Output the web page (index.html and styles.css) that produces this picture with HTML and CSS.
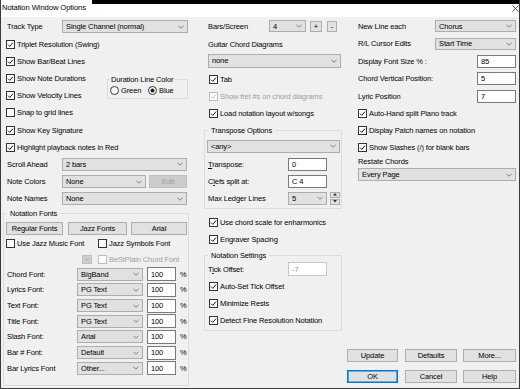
FILE: index.html
```html
<!DOCTYPE html>
<html><head><meta charset="utf-8"><title>Notation Window Options</title><link rel="stylesheet" href="styles.css"></head>
<body>
<div class="win">
  <div class="titlebar">
    <span class="title">Notation Window Options</span>
    <span class="tb-fill"><svg class="close" viewBox="0 0 8 8"><path d="M0.5 0.5L7.5 7.5M7.5 0.5L0.5 7.5"/></svg></span>
  </div>
  <div class="content">
    <!-- LEFT COLUMN -->
    <div class="col left">
      <div class="row lrow"><span class="lbl w55">Track Type</span><div class="combo w126"><span>Single Channel (normal)</span><svg class="chev" viewBox="0 0 7 4"><path d="M.5 .5 3.5 3.5 6.5 .5"/></svg></div></div>
      <div class="row cbrow"><i class="cb"><svg viewBox="0 0 7 7"><path d="M1 3.6 2.8 5.4 6 1.6"/></svg></i>Triplet Resolution (Swing)</div>
      <div class="row cbrow"><i class="cb"><svg viewBox="0 0 7 7"><path d="M1 3.6 2.8 5.4 6 1.6"/></svg></i>Show Bar/Beat Lines</div>
      <div class="durwrap">
        <div class="durchecks">
          <div class="row cbrow"><i class="cb"><svg viewBox="0 0 7 7"><path d="M1 3.6 2.8 5.4 6 1.6"/></svg></i>Show Note Durations</div>
          <div class="row cbrow"><i class="cb"><svg viewBox="0 0 7 7"><path d="M1 3.6 2.8 5.4 6 1.6"/></svg></i>Show Velocity Lines</div>
        </div>
        <fieldset class="dur">
          <legend>Duration Line Color</legend>
          <div class="radios">
            <span class="ritem"><i class="rb"><svg viewBox="0 0 9 9"><circle cx="4.5" cy="4.5" r="4" class="ring"/></svg></i>Green</span>
            <span class="ritem"><i class="rb"><svg viewBox="0 0 9 9"><circle cx="4.5" cy="4.5" r="4" class="ring"/><circle cx="4.5" cy="4.5" r="2" class="dot"/></svg></i>Blue</span>
          </div>
        </fieldset>
      </div>
      <div class="row cbrow"><i class="cb"></i>Snap to grid lines</div>
      <div class="row cbrow"><i class="cb"><svg viewBox="0 0 7 7"><path d="M1 3.6 2.8 5.4 6 1.6"/></svg></i>Show Key Signature</div>
      <div class="row cbrow"><i class="cb"><svg viewBox="0 0 7 7"><path d="M1 3.6 2.8 5.4 6 1.6"/></svg></i>Highlight playback notes in Red</div>
      <div class="row lrow"><span class="lbl w55">Scroll Ahead</span><div class="combo w125"><span>2 bars</span><svg class="chev" viewBox="0 0 7 4"><path d="M.5 .5 3.5 3.5 6.5 .5"/></svg></div></div>
      <div class="row lrow"><span class="lbl w55">Note Colors</span><div class="combo w84"><span>None</span><svg class="chev" viewBox="0 0 7 4"><path d="M.5 .5 3.5 3.5 6.5 .5"/></svg></div><div class="btn dbtn w38 ml3">Edit</div></div>
      <div class="row lrow"><span class="lbl w55">Note Names</span><div class="combo w125"><span>None</span><svg class="chev" viewBox="0 0 7 4"><path d="M.5 .5 3.5 3.5 6.5 .5"/></svg></div></div>

      <fieldset class="fonts">
        <legend>Notation Fonts</legend>
        <div class="btnline">
          <div class="btn w57">Regular Fonts</div>
          <div class="btn w59 ml5">Jazz Fonts</div>
          <div class="btn w56 ml4">Arial</div>
        </div>
        <div class="frow h17">
          <span class="citem w92"><i class="cb"></i>Use Jazz Music Font</span>
          <span class="citem"><i class="cb"></i>Jazz Symbols Font</span>
        </div>
        <div class="frow h14">
          <div class="btn dbtn plus">+</div>
          <span class="citem dis-text"><i class="cb dis"></i>BeStPlain Chord Font</span>
        </div>
        <div class="frow fontrow"><span class="flbl">Chord Font:</span><div class="combo w66"><span>BigBand</span><svg class="chev" viewBox="0 0 7 4"><path d="M.5 .5 3.5 3.5 6.5 .5"/></svg></div><div class="inp w29 ml4 h14">100</div><span class="pct">%</span></div>
        <div class="frow fontrow"><span class="flbl">Lyrics Font:</span><div class="combo w66"><span>PG Text</span><svg class="chev" viewBox="0 0 7 4"><path d="M.5 .5 3.5 3.5 6.5 .5"/></svg></div><div class="inp w29 ml4 h14">100</div><span class="pct">%</span></div>
        <div class="frow fontrow"><span class="flbl">Text Font:</span><div class="combo w66"><span>PG Text</span><svg class="chev" viewBox="0 0 7 4"><path d="M.5 .5 3.5 3.5 6.5 .5"/></svg></div><div class="inp w29 ml4 h14">100</div><span class="pct">%</span></div>
        <div class="frow fontrow"><span class="flbl">Title Font:</span><div class="combo w66"><span>PG Text</span><svg class="chev" viewBox="0 0 7 4"><path d="M.5 .5 3.5 3.5 6.5 .5"/></svg></div><div class="inp w29 ml4 h14">100</div><span class="pct">%</span></div>
        <div class="frow fontrow"><span class="flbl">Slash Font:</span><div class="combo w66"><span>Arial</span><svg class="chev" viewBox="0 0 7 4"><path d="M.5 .5 3.5 3.5 6.5 .5"/></svg></div><div class="inp w29 ml4 h14">100</div><span class="pct">%</span></div>
        <div class="frow fontrow"><span class="flbl">Bar # Font:</span><div class="combo w66"><span>Default</span><svg class="chev" viewBox="0 0 7 4"><path d="M.5 .5 3.5 3.5 6.5 .5"/></svg></div><div class="inp w29 ml4 h14">100</div><span class="pct">%</span></div>
        <div class="frow fontrow"><span class="flbl">Bar Lyrics Font</span><div class="combo w66"><span>Other...</span><svg class="chev" viewBox="0 0 7 4"><path d="M.5 .5 3.5 3.5 6.5 .5"/></svg></div><div class="inp w29 ml4 h14">100</div><span class="pct">%</span></div>
      </fieldset>
    </div>

    <!-- MIDDLE COLUMN -->
    <div class="col mid">
      <div class="row mrow h18"><span class="lbl w61">Bars/Screen</span><div class="combo w37 h12"><span>4</span><svg class="chev" viewBox="0 0 7 4"><path d="M.5 .5 3.5 3.5 6.5 .5"/></svg></div><div class="btn sbtn w12 ml4">+</div><div class="btn sbtn w10 ml5">-</div></div>
      <div class="row mrow h18"><span class="lbl">Guitar Chord Diagrams</span></div>
      <div class="row mrow h15"><div class="combo w133 h14"><span>none</span><svg class="chev" viewBox="0 0 7 4"><path d="M.5 .5 3.5 3.5 6.5 .5"/></svg></div></div>
      <div class="row mcb tabrow"><i class="cb"><svg viewBox="0 0 7 7"><path d="M1 3.6 2.8 5.4 6 1.6"/></svg></i>Tab</div>
      <div class="row mcb h17h dis-text"><i class="cb dis"><svg viewBox="0 0 7 7"><path d="M1 3.6 2.8 5.4 6 1.6"/></svg></i>Show fret #s on chord diagrams</div>
      <div class="row mcb"><i class="cb"><svg viewBox="0 0 7 7"><path d="M1 3.6 2.8 5.4 6 1.6"/></svg></i>Load notation layout w/songs</div>

      <fieldset class="trans">
        <legend>Transpose Options</legend>
        <div class="combo w133 any"><span>&lt;any&gt;</span><svg class="chev" viewBox="0 0 7 4"><path d="M.5 .5 3.5 3.5 6.5 .5"/></svg></div>
        <div class="row grow mt3"><span class="glbl"><u>T</u>ranspose:</span><div class="inp w39">0</div></div>
        <div class="row grow"><span class="glbl">C<u>l</u>efs split at:</span><div class="inp w39">C 4</div></div>
        <div class="row grow"><span class="glbl">Max Ledger Lines</span><div class="combo w39"><span>5</span><svg class="chev" viewBox="0 0 7 4"><path d="M.5 .5 3.5 3.5 6.5 .5"/></svg></div>
          <div class="spin"><span class="sp"><svg viewBox="0 0 5 3"><path d="M0 3 2.5 0 5 3z"/></svg></span><span class="sp"><svg viewBox="0 0 5 3"><path d="M0 0 2.5 3 5 0z"/></svg></span></div>
        </div>
      </fieldset>

      <div class="row mcb mt5"><i class="cb"><svg viewBox="0 0 7 7"><path d="M1 3.6 2.8 5.4 6 1.6"/></svg></i>Use chord scale for enharmonics</div>
      <div class="row mcb"><i class="cb"><svg viewBox="0 0 7 7"><path d="M1 3.6 2.8 5.4 6 1.6"/></svg></i>Engraver Spacing</div>

      <fieldset class="nset">
        <legend>Notation Settings</legend>
        <div class="row grow"><span class="glbl">T<u>i</u>ck Offset:</span><div class="inp w39 h14 dinp">-7</div></div>
        <div class="row gcb"><i class="cb"><svg viewBox="0 0 7 7"><path d="M1 3.6 2.8 5.4 6 1.6"/></svg></i>Auto-Set Tick Offset</div>
        <div class="row gcb"><i class="cb"><svg viewBox="0 0 7 7"><path d="M1 3.6 2.8 5.4 6 1.6"/></svg></i>Minimize Rests</div>
        <div class="row gcb"><i class="cb"><svg viewBox="0 0 7 7"><path d="M1 3.6 2.8 5.4 6 1.6"/></svg></i>Detect Fine Resolution Notation</div>
      </fieldset>
    </div>

    <!-- RIGHT COLUMN -->
    <div class="col right">
      <div class="row rrow h18"><span class="lbl w77">New Line each</span><div class="combo w81 h12"><span>Chorus</span><svg class="chev" viewBox="0 0 7 4"><path d="M.5 .5 3.5 3.5 6.5 .5"/></svg></div></div>
      <div class="row rrow h17h"><span class="lbl w77">R/L Cursor Edits</span><div class="combo w81 h12"><span>Start Time</span><svg class="chev" viewBox="0 0 7 4"><path d="M.5 .5 3.5 3.5 6.5 .5"/></svg></div></div>
      <div class="row rrow h17h"><span class="lbl w119">Display Font Size % :</span><div class="inp w39 h12">85</div></div>
      <div class="row rrow h17h"><span class="lbl w119">Chord Vertical Position:</span><div class="inp w39 h12">5</div></div>
      <div class="row rrow h17h"><span class="lbl w119">Lyric Position</span><div class="inp w39 h12">7</div></div>
      <div class="row rrow"><i class="cb"><svg viewBox="0 0 7 7"><path d="M1 3.6 2.8 5.4 6 1.6"/></svg></i>Auto-Hand split Piano track</div>
      <div class="row rrow"><i class="cb"><svg viewBox="0 0 7 7"><path d="M1 3.6 2.8 5.4 6 1.6"/></svg></i>Display Patch names on notation</div>
      <div class="row rrow"><i class="cb"><svg viewBox="0 0 7 7"><path d="M1 3.6 2.8 5.4 6 1.6"/></svg></i>Show Slashes (/) for blank bars</div>
      <div class="row rrow h10">Restate Chords</div>
      <div class="combo w158 every"><span>Every Page</span><svg class="chev" viewBox="0 0 7 4"><path d="M.5 .5 3.5 3.5 6.5 .5"/></svg></div>
      <div class="btnrow bottom1">
        <div class="btn w51">Update</div>
        <div class="btn w52 ml7">Defaults</div>
        <div class="btn w53 ml6">More...</div>
      </div>
      <div class="btnrow bottom2">
        <div class="btn w51 okbtn">OK</div>
        <div class="btn w52 ml7">Cancel</div>
        <div class="btn w53 ml6">Help</div>
      </div>
    </div>
  </div>
</div>
</body></html>
```
FILE: styles.css
```css
*{box-sizing:border-box}
html,body{margin:0;padding:0}
body{width:520px;height:389px;overflow:hidden;font-family:"Liberation Sans",Arial,sans-serif;font-size:7.5px;letter-spacing:-0.12px;color:#000;background:#f0f0f0}
.win{width:520px;height:389px;display:flex;flex-direction:column;border:1px solid #3a3a3a;border-top:0;background:#f0f0f0}
.titlebar{height:17px;flex:none;display:flex;align-items:flex-start;background:#fff}
.title{font-size:7.7px;line-height:9px;padding:2.5px 6px 0 1px;white-space:nowrap}
.tb-fill{flex:1;align-self:stretch;display:flex;justify-content:flex-end;align-items:flex-start;border-top:4px solid #000}
.close{width:7px;height:7px;margin:0.5px 0.5px 0 0;fill:none;stroke:#111;stroke-width:0.8}
.content{flex:1;display:flex;min-height:0}
.col{display:flex;flex-direction:column;flex:none}
.left{width:186px;margin-left:2px;padding-top:1.4px}
.mid{width:138px;margin-left:15px}
.right{width:169px;margin-left:5px;padding-bottom:5px}

.row{height:17.2px;display:flex;align-items:center;white-space:nowrap;flex:none}
.lrow{padding-left:4px}
.cbrow{padding-left:3px}
.mrow{padding-left:4px}
.mcb{padding-left:5px;height:17px}
.rrow{padding-left:11px;height:17px}
.h18{height:18px}
.h17h{height:17.5px}
.h15{height:15px}
.h10{height:10px}
.tabrow{margin-top:2.5px}
.mt3{margin-top:3px}
.mt5{margin-top:5px}

.lbl{flex:none}
.w55{width:55px}.w61{width:61px}.w77{width:77px}.w119{width:119px}
.w126{width:126px}.w125{width:125px}.w84{width:84px}.w38{width:38px}
.w57{width:57px}.w59{width:59px}.w56{width:56px}.w92{width:92px}
.w66{width:66px}.w29{width:29px}.w37{width:37px}.w12{width:12px}.w10{width:10px}
.w133{width:133px}.w39{width:39px}.w81{width:81px}.w158{width:158px}
.w51{width:51px}.w52{width:52px}.w53{width:53px}
.ml3{margin-left:3px}.ml4{margin-left:4px}.ml5{margin-left:5px}.ml6{margin-left:6px}.ml7{margin-left:7px}

.cb{display:inline-flex;align-items:center;justify-content:center;width:9px;height:9px;border:1px solid #333;background:#fff;flex:none;margin-right:2px}
.cb svg{width:7px;height:7px;fill:none;stroke:#1a1a1a;stroke-width:1}
.cb.dis{border-color:#bcbcbc}
.cb.dis svg{stroke:#bcbcbc}
.dis-text{color:#a0a0a0}

.combo{display:flex;align-items:center;justify-content:space-between;height:13px;background:#e1e1e1;border:1px solid #adadad;padding:0 3px 0 3px;flex:none;white-space:nowrap}
.h12{height:12px}
.h14{height:14px}
.chev{width:6px;height:4px;fill:none;stroke:#606060;stroke-width:0.9;flex:none}
.inp{display:flex;align-items:center;height:13px;background:#fff;border:1px solid #7a7a7a;padding-left:3px;flex:none}
.dinp{border-color:#c8c8c8;color:#9a9a9a}
.btn{display:flex;align-items:center;justify-content:center;height:13px;background:#e1e1e1;border:1px solid #adadad;flex:none;white-space:nowrap}
.dbtn{background:#cccccc;border-color:#bfbfbf;color:#a0a0a0}
.sbtn{height:11px}
.okbtn{border-color:#0078d7;box-shadow:inset 0 0 0 0.6px #0078d7}

fieldset{margin:0;border:1px solid #dcdcdc;padding:0 1px 0 2px;min-width:0}
legend{padding:0 3px;margin-left:1px;line-height:9px;white-space:nowrap}

.durwrap{display:flex;flex:none}
.durchecks{flex:1}
.dur{width:81px;margin:6px 1px 0 0;align-self:flex-start;padding:0 2px}
.dur legend{padding:0 1px;margin-left:0;line-height:8px}
.radios{display:flex;align-items:center;height:14px}
.ritem{display:flex;align-items:center}
.ritem:first-child{width:38px}
.rb{display:inline-flex;width:9px;height:9px;margin-right:2px}
.rb svg{width:9px;height:9px}
.ring{fill:#fff;stroke:#333;stroke-width:1}
.dot{fill:#222}

.fonts{width:186px;margin-top:1.9px;padding:4px 1px 8.6px 2px}
.btnline{display:flex;height:13px}
.frow{display:flex;align-items:center;white-space:nowrap}
.h17{height:17px}
.h14{height:14px}
.citem{display:flex;align-items:center}
.plus{width:10px;height:9px;margin-left:76px;margin-right:6px;font-size:6px}
.fontrow{height:15.7px}
.flbl{width:71px;padding-left:1px;flex:none}
.pct{margin-left:4px}

.trans{width:138px;margin-top:3.5px;padding:5px 1px 1px 2px}
.any{height:13px}
.grow{height:17px;padding-left:1px}
.glbl{width:80px;flex:none}
.spin{display:flex;flex-direction:column;margin-left:3px;width:10px;height:13px;justify-content:space-between}
.sp{display:flex;align-items:center;justify-content:center;height:6px;background:#e1e1e1;border:1px solid #adadad}
.sp svg{width:4px;height:2.5px;fill:#333}
.nset{width:138px;margin-top:3px;padding:1px 1px 1px 2px}
.gcb{height:17px;padding-left:2px}

.every{margin-left:11px;margin-top:2px}
.btnrow{display:flex;flex:none}
.bottom1{margin-top:auto}
.bottom2{margin-top:8px}
```
